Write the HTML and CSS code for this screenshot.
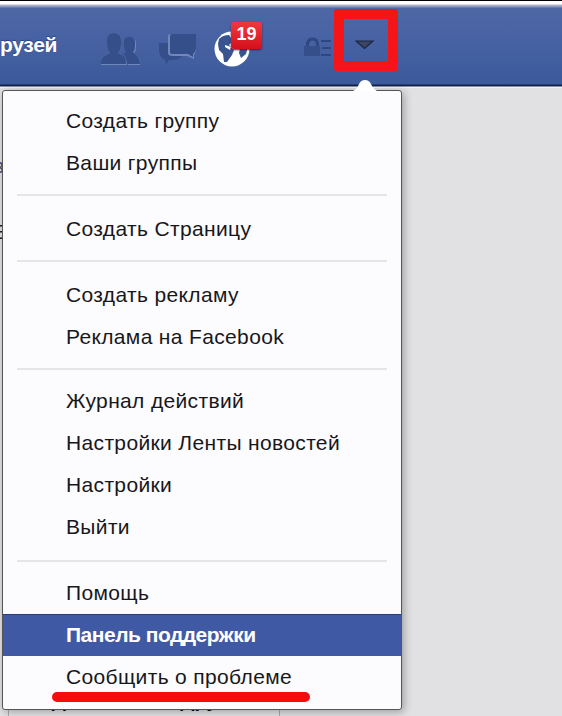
FILE: index.html
```html
<!DOCTYPE html>
<html lang="ru">
<head>
  <meta charset="UTF-8">
  <meta name="viewport" content="width=device-width, initial-scale=1.0">
  <title>Facebook</title>
  <link rel="stylesheet" href="styles.css">
</head>
<body>
  <header class="topbar">
    <span class="nav-link">рузей</span>
    <svg class="icon friends" width="42" height="36" viewBox="0 0 42 36">
      <path class="glow" d="M1 33V29Q1 26 4 24L10 21Q7 18 7 12V8Q7 1 14 1Q21 1 21 8V12Q21 18 18 21L24 24Q26 26 27 33ZM28 33Q28 26 24 23L27 21Q25 18 25 14V11Q25 6 30 6Q36 6 36 11V15Q36 19 34 21L38 25Q41 27 40 33Z"/>
      <path class="shape" d="M1 32V29Q1 26 4 24L10 21Q7 18 7 12V8Q7 1 14 1Q21 1 21 8V12Q21 18 18 21L24 24Q26 26 26 32ZM27 32Q27 25 23 22L26 20Q24 17 24 13V10Q24 5 29 5Q35 5 35 10V14Q35 18 33 20L37 24Q40 26 40 32Z"/>
    </svg>
    <svg class="icon messages" width="40" height="34" viewBox="0 0 40 34">
      <path class="shape" d="M1 10H11V20Q12 23 16 23H24Q22 26 17 27H11L8 32L7 27Q1 24 1 17Z"/>
      <path class="glow" d="M10 3Q10 1 13 1H38V15Q38 20 36 22V26L29 23H15Q10 23 10 20Z"/>
      <path class="shape" d="M12 3Q12 1 14 1H38V14Q38 19 35 21V24L30 21H15Q12 21 12 19Z"/>
    </svg>
    <div class="notifications">
      <svg width="36" height="36" viewBox="0 0 36 36">
        <circle cx="18" cy="18" r="17.5" fill="#fff"/>
        <path fill="#3a5490" d="M5 8Q9 4 15 4L19 10L15 14L20 19L18 24L13 31L10 31L9 23L5 19L4 13ZM26 17L34 15L32 23L27 27L25 22Z"/>
        <path fill="#fff" d="M11 14L17 16L16 19L11 16Z"/>
      </svg>
      <span class="badge">19</span>
    </div>
    <svg class="icon privacy" width="28" height="22" viewBox="0 0 28 22">
      <path d="M3.500 11V9Q3.500 3 8.500 3Q13.500 3 13.500 9V11" fill="none" stroke="#2f4780" stroke-width="3"/>
      <path class="shape" d="M0 10H16V20H0Z"/>
      <path d="M17 5H27M18 12H27M17 19H27" stroke="#2f4780" stroke-width="2"/>
    </svg>
    <div class="menu-toggle">
      <svg width="20" height="10" viewBox="0 0 20 10">
        <path d="M1 1H18L9.500 8.500Z" fill="#3b4560" stroke="#1c2745" stroke-width="1.200"/>
      </svg>
    </div>
  </header>

  <main class="page">
    <div class="edge-text first">в</div>
    <div class="edge-text second">Е</div>
    <div class="cell">
      <span>ВАДИ</span>
      <span>Друг</span>
    </div>
  </main>

  <nav class="dropdown">
    <svg class="arrow" width="24" height="11" viewBox="0 0 24 11">
      <path d="M0 11Q4 9 6 4Q8 0 12 0Q16 0 18 4Q20 9 24 11Z" fill="#fff"/>
    </svg>
    <ul>
      <li>Создать группу</li>
      <li>Ваши группы</li>
      <li class="divider"></li>
      <li>Создать Страницу</li>
      <li class="divider"></li>
      <li>Создать рекламу</li>
      <li>Реклама на Facebook</li>
      <li class="divider short"></li>
      <li>Журнал действий</li>
      <li>Настройки Ленты новостей</li>
      <li>Настройки</li>
      <li>Выйти</li>
      <li class="divider low"></li>
      <li>Помощь</li>
      <li class="active">Панель поддержки</li>
      <li>Сообщить о проблеме</li>
    </ul>
    <div class="underline"></div>
  </nav>
</body>
</html>
```

FILE: styles.css
```css
* {
  box-sizing: border-box;
}
body {
  margin: 0;
  width: 562px;
  height: 716px;
  overflow: hidden;
  position: relative;
  background: #e1e1e4;
  font-family: "Liberation Sans", Arial, sans-serif;
}
.topbar {
  display: flex;
  align-items: flex-start;
  height: 88px;
  border-top: 1px solid #000;
  background: linear-gradient(#fff 0, #fff 3px, #b5b8cc 4px, #8790b8 6px, #4e67a5 7px, #4762a3 40px, #3b5a9b 83px, #14234c 84px, #14234c 85px, #f4f4f6 86px);
}
.nav-link {
  width: 58px;
  margin-top: 31px;
  color: #fff;
  font-size: 21px;
  font-weight: bold;
  line-height: 26px;
  letter-spacing: -0.3px;
  text-shadow: 0 -1px 1px #29427c;
}
.icon {
  flex: none;
}
.shape {
  fill: #344f8a;
}
.glow {
  fill: #7188bb;
}
.friends {
  margin: 31px 0 0 42px;
}
.messages {
  margin: 32px 0 0 16px;
}
.notifications {
  position: relative;
  width: 36px;
  height: 36px;
  margin: 30px 0 0 16px;
}
.badge {
  position: absolute;
  left: 17px;
  top: -9px;
  width: 31px;
  height: 27px;
  border-radius: 3px;
  background: linear-gradient(#f0383c, #d4101c);
  box-shadow: 0 1px 2px #4b1c40;
  color: #fff;
  font-size: 18px;
  font-weight: bold;
  line-height: 24px;
  text-align: center;
}
.privacy {
  margin: 35px 0 0 54px;
}
.menu-toggle {
  display: flex;
  align-items: center;
  justify-content: center;
  width: 64px;
  height: 62px;
  margin: 8px 0 0 2px;
  padding: 10px 3px 0 0;
  border: 10px solid #f51518;
  border-radius: 3px;
}
.page {
  display: flex;
  flex-direction: column;
  height: 628px;
}
.edge-text {
  width: 4px;
  display: flex;
  justify-content: flex-end;
  font-size: 20px;
  line-height: 24px;
  color: #222;
}
.edge-text.first {
  margin-top: 66px;
  color: #3b4f8c;
}
.edge-text.second {
  margin-top: 42px;
}
.cell {
  display: flex;
  gap: 100px;
  width: 272px;
  height: 38px;
  margin: auto 0 0 8px;
  padding: 9px 0 0 14px;
  border: 1px solid #aaa;
  border-bottom: 0;
  background: #e4e4e6;
  font-size: 20px;
  font-weight: bold;
  line-height: 24px;
}
.dropdown {
  position: absolute;
  left: 2px;
  top: 90px;
  width: 400px;
  height: 620px;
  border: 1px solid #555;
  border-radius: 3px;
  background: #fcfbfd;
  box-shadow: 2px 2px 8px rgba(0, 0, 0, 0.3);
}
.arrow {
  position: absolute;
  left: 350px;
  top: -11px;
}
.dropdown ul {
  margin: 0;
  padding: 9px 0 0;
  list-style: none;
}
.dropdown li {
  height: 42px;
  padding-left: 63px;
  font-size: 21px;
  line-height: 42px;
  letter-spacing: 0.35px;
  white-space: nowrap;
  color: #17171b;
}
.dropdown .divider {
  height: 2px;
  margin: 10px 14px 12px;
  background: #e5e4e8;
}
.dropdown .short {
  margin-bottom: 10px;
}
.dropdown .low {
  margin: 12px 14px 10px;
}
.dropdown .active {
  background: #4059a4;
  border-top: 1px solid #293d7b;
  line-height: 40px;
  color: #fff;
  font-weight: bold;
  letter-spacing: -0.5px;
}
.underline {
  position: absolute;
  left: 49px;
  top: 601px;
  width: 258px;
  height: 10px;
  border-radius: 5px;
  background: #f30d0f;
}
```
